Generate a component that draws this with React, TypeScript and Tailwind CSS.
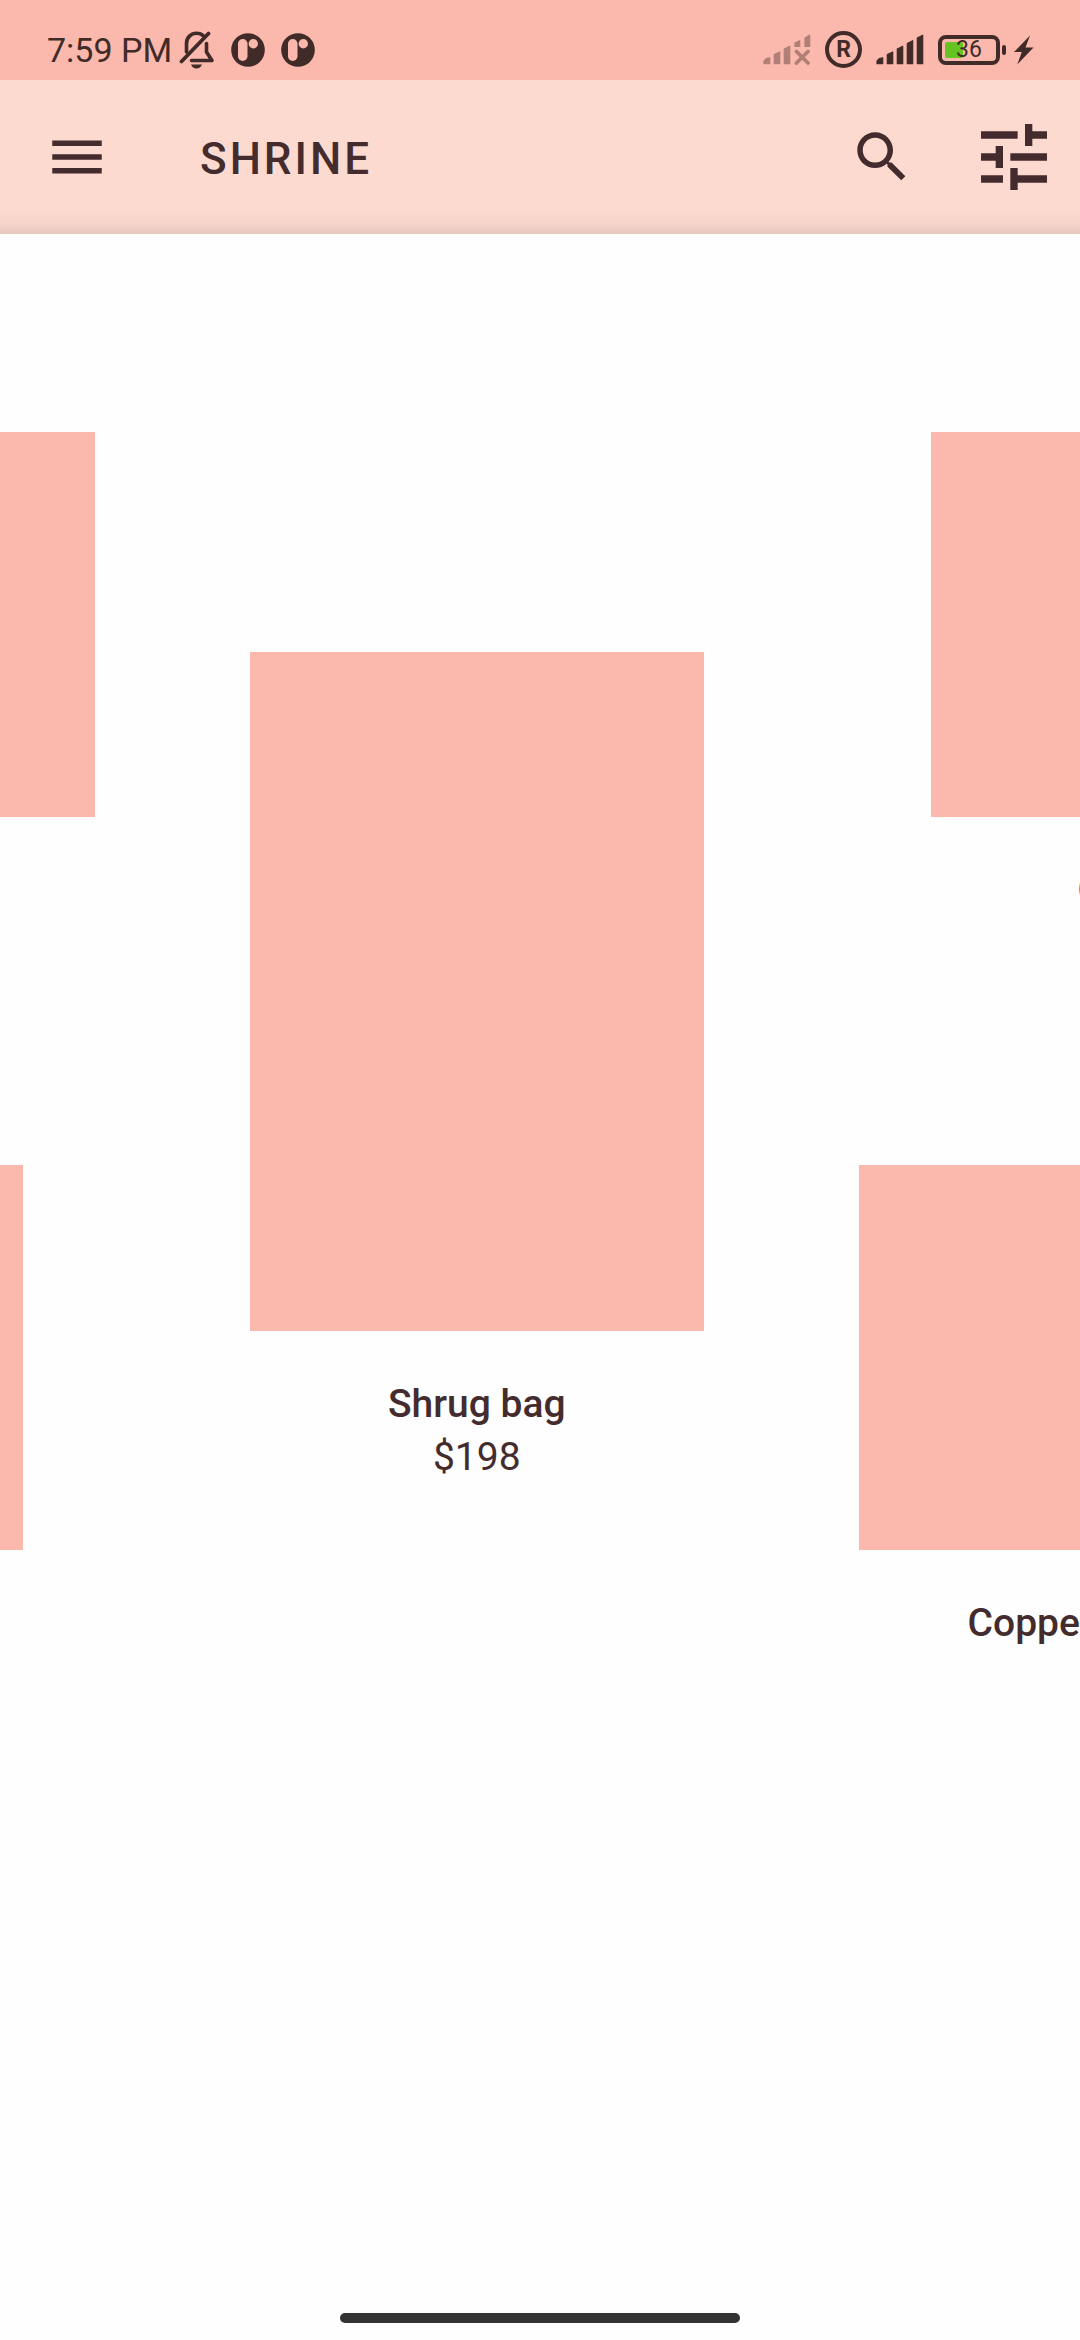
import type { ReactNode } from "react";

function BellOffIcon() {
  return (
    <svg viewBox="0 0 36 38" className="h-[38px] w-9" fill="none" stroke="currentColor" strokeLinecap="round" strokeLinejoin="round" aria-hidden="true">
      <path d="M2.5 30.5 29.500 2.500" strokeWidth="3.800" />
      <path d="M7.500 21V12.500C7.500 6.500 12 2.300 17.500 2.300C20.500 2.300 22.800 3.300 24.500 5" strokeWidth="3.600" />
      <path d="M27.500 12.500V21L33 29.500H12.500" strokeWidth="3.600" />
      <path d="M12 33.500H23C22 36 20 37.500 17.500 37.500S13 36 12 33.500Z" fill="currentColor" stroke="none" />
    </svg>
  );
}

function PatreonBadge() {
  return (
    <svg viewBox="0 0 34 34" className="size-[34px]" aria-hidden="true">
      <circle cx="17" cy="17" r="16.800" fill="currentColor" />
      <rect x="7" y="6" width="9.500" height="22" rx="4.700" fill="#fbb8ac" />
      <circle cx="22.300" cy="10.700" r="4.700" fill="#fbb8ac" />
    </svg>
  );
}

function SignalIcon() {
  return (
    <svg viewBox="0 0 48 31" className="h-[31px] w-12" fill="currentColor" stroke="currentColor" strokeWidth="1.200" strokeLinejoin="round" aria-hidden="true">
      <path d="M1 27 3.500 24.500 6.700 23.800V29.700H1Z" />
      <path d="M11.300 20.500 16.700 18V29.700H11.300Z" />
      <path d="M21.300 15 26.700 12.300V29.700H21.300Z" />
      <path d="M31.300 9.500 36.700 6.700V29.700H31.300Z" />
      <path d="M41.300 4 46.700 1.200V29.700H41.300Z" />
    </svg>
  );
}

function NoSignalIcon() {
  return (
    <svg viewBox="0 0 48 31" className="h-[31px] w-12 opacity-40" fill="currentColor" stroke="currentColor" strokeWidth="1.200" strokeLinejoin="round" aria-hidden="true">
      <path d="M1 27 3.500 24.500 6.700 23.800V29.700H1Z" />
      <path d="M11.300 20.500 16.700 18V29.700H11.300Z" />
      <path d="M21.300 15 26.700 12.300V29.700H21.300Z" />
      <path d="M32 9 36.700 6.700V12.500H32Z" />
      <path d="M42 4 46.700 1.200V12.500H42Z" />
      <path d="M33.500 17.500 45 29M45 17.500 33.500 29" strokeWidth="3.800" strokeLinecap="round" />
    </svg>
  );
}

function RoamingIcon() {
  return (
    <span className="flex size-[37px] items-center justify-center rounded-full border-4 border-current text-[23px] leading-none font-bold">
      R
    </span>
  );
}

function Battery() {
  return (
    <div className="flex items-center gap-0.5">
      <div className="relative flex h-[30px] w-[62px] items-center justify-center rounded-lg border-4 border-current">
        <div className="absolute top-[3px] left-[3px] h-4 w-[18px] rounded-xs bg-[#65c421]" />
        <span className="relative text-[23px] leading-none">36</span>
      </div>
      <div className="h-[10px] w-1 rounded-full bg-current" />
    </div>
  );
}

function BoltIcon() {
  return (
    <svg viewBox="0 0 20 30" className="h-[30px] w-5" fill="currentColor" aria-hidden="true">
      <path d="M16 .5 0 17H7.800L3.300 29.500 19.500 12.500H11.500Z" />
    </svg>
  );
}

function StatusBar() {
  return (
    <div className="flex h-20 items-center justify-between bg-[#fbb8ac] pt-[19px] pr-[46px] pl-[47px] text-[#412b28]">
      <div className="flex items-center">
        <span className="text-[34px] leading-9">7:59 PM</span>
        <div className="ml-[7px] flex items-center gap-4">
          <BellOffIcon />
          <PatreonBadge />
          <PatreonBadge />
        </div>
      </div>
      <div className="flex items-center gap-[14px]">
        <NoSignalIcon />
        <RoamingIcon />
        <SignalIcon />
        <div className="flex items-center gap-2">
          <Battery />
          <BoltIcon />
        </div>
      </div>
    </div>
  );
}

function BarButton({ label, children }: { label: string; children: ReactNode }) {
  return (
    <button type="button" aria-label={label} className="shrink-0">
      {children}
    </button>
  );
}

function AppBar() {
  return (
    <header className="relative flex h-[154px] items-center bg-[#fddad0] pr-[22px] pl-11">
      <div className="pointer-events-none absolute inset-x-0 bottom-0 h-6 bg-linear-to-t from-black/9 via-black/3 via-40% to-transparent" />
      <BarButton label="Menu">
        <svg viewBox="0 0 24 24" className="size-[66px]" fill="currentColor" aria-hidden="true">
          <path d="M3 18h18v-2H3v2zm0-5h18v-2H3v2zm0-7v2h18V6H3z" />
        </svg>
      </BarButton>
      <h1 className="ml-[90px] flex-1 pt-1 text-[44px] leading-none font-medium tracking-[3px]">SHRINE</h1>
      <div className="flex items-center gap-[55px]">
        <BarButton label="Search">
          <svg viewBox="0 0 24 24" className="size-[66px]" fill="currentColor" aria-hidden="true">
            <path d="M15.500 14h-.79l-.28-.27C15.410 12.590 16 11.110 16 9.500 16 5.910 13.090 3 9.500 3S3 5.910 3 9.500 5.910 16 9.500 16c1.610 0 3.090-.59 4.230-1.570l.27.28v.79l5 4.990L20.490 19l-4.990-5zm-6 0C7.010 14 5 11.990 5 9.500S7.010 5 9.500 5 14 7.010 14 9.500 11.990 14 9.500 14z" />
          </svg>
        </BarButton>
        <BarButton label="Filter">
          <svg viewBox="0 0 24 24" className="size-[88px]" fill="currentColor" aria-hidden="true">
            <path d="M3 17v2h6v-2H3zM3 5v2h10V5H3zm10 16v-2h8v-2h-8v-2h-2v6h2zM7 9v2H3v2h4v2h2V9H7zm14 4v-2H11v2h10zm-6-4h2V7h4V5h-4V3h-2v6z" />
          </svg>
        </BarButton>
      </div>
    </header>
  );
}

function Catalog() {
  return (
    <main className="flex items-center gap-[155px] overflow-hidden pt-[198px]">
      <div className="flex w-[95px] shrink-0 flex-col gap-[348px] pb-[153px]">
        <div className="h-[385px] bg-[#fbb8ac]" />
        <div className="mr-[72px] h-[385px] bg-[#fbb8ac]" />
      </div>

      <article className="w-[42%] shrink-0 text-center text-[39px] leading-[53px]">
        <div className="h-[679px] bg-[#fbb8ac]" />
        <h2 className="mt-[47px] font-medium">Shrug bag</h2>
        <p>$198</p>
      </article>

      <div className="flex min-w-0 flex-1 flex-col gap-[248px] pb-[53px] text-[39px] leading-[53px] font-medium whitespace-nowrap">
        <article className="ml-[72px]">
          <div className="h-[385px] bg-[#fbb8ac]" />
          <h2 className="mt-[47px] ml-[147px]">Gatsby hat</h2>
        </article>
        <article>
          <div className="h-[385px] bg-[#fbb8ac]" />
          <h2 className="mt-[47px] ml-[109px]">Copper wire rack</h2>
        </article>
      </div>
    </main>
  );
}

export default function App() {
  return (
    <div className="flex min-h-screen flex-col overflow-x-hidden bg-[#fefefe] font-['Roboto',sans-serif] text-[#442c2e]">
      <StatusBar />
      <AppBar />
      <Catalog />
      <div className="mx-auto mt-auto mb-[17px] h-[10px] w-[37%] rounded-full bg-[#333333]" />
    </div>
  );
}
